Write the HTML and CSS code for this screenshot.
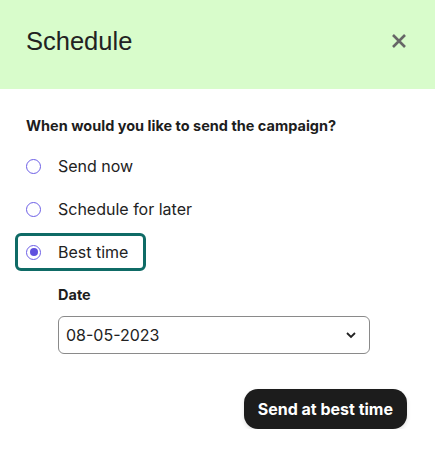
FILE: index.html
```html
<!DOCTYPE html>
<html>
<head>
<meta charset="utf-8">
<link rel="stylesheet" href="styles.css">
</head>
<body>
<div class="modal">
  <div class="header">
    <h1 class="title">Schedule</h1>
    <button class="close" aria-label="Close">
      <svg width="16" height="16" viewBox="0 0 16 16"><path d="M2 2 L14 14 M14 2 L2 14" stroke="#666" stroke-width="2.6" stroke-linecap="butt"/></svg>
    </button>
  </div>
  <div class="body">
    <p class="question">When would you like to send the campaign?</p>
    <div class="options">
      <label class="option"><span class="radio"></span><span>Send now</span></label>
      <label class="option"><span class="radio"></span><span>Schedule for later</span></label>
      <label class="option selected"><span class="radio checked"></span><span>Best time</span></label>
    </div>
    <div class="date-field">
      <div class="date-label">Date</div>
      <div class="select">
        <span>08-05-2023</span>
        <svg width="12" height="8" viewBox="0 0 12 8"><path d="M2 2 L6 6 L10 2" fill="none" stroke="#222" stroke-width="1.8"/></svg>
      </div>
    </div>
    <div class="actions">
      <button class="primary">Send at best time</button>
    </div>
  </div>
</div>
</body>
</html>
```

FILE: styles.css
```css
* { box-sizing: border-box; }
html, body { margin: 0; padding: 0; background: #fff; }
body { font-family: Inter, "Noto Sans", sans-serif; color: #1d1d1d; }
.modal { width: 435px; }
.header {
  height: 89px;
  background: #d8fccb;
  display: flex;
  align-items: center;
  justify-content: space-between;
  padding: 0 28px 6px 26px;
}
.title {
  margin: 0;
  font-family: "Liberation Sans", Arial, sans-serif;
  font-weight: 400;
  font-size: 25.5px;
  color: #222;
}
.close {
  background: none; border: 0; padding: 0; width: 16px; height: 16px; display: flex;
  margin-top: -2px;
}
.body { padding: 28px 25px 0 26px; }
.question { margin: 0; font-size: 14.5px; font-weight: 700; line-height: 18px; }
.options { display: flex; flex-direction: column; margin-top: 12px; margin-left: -11px; }
.option {
  display: flex; align-items: center;
  height: 38px; margin-bottom: 5px;
  padding-left: 11px;
  font-size: 16px; color: #222;
  border: 3px solid transparent; border-radius: 6px;
  width: 131px; white-space: nowrap;
}
.option.selected { border-color: #0f6b66; }
.radio {
  width: 15px; height: 15px; border-radius: 50%;
  border: 1.5px solid #6d5fe6; margin-right: 17px; flex: none;
  margin-left: -3px;
  display: flex; align-items: center; justify-content: center;
}
.radio.checked::after {
  content: ""; width: 8px; height: 8px; border-radius: 50%; background: #5f4fdf;
}
.date-field { margin-left: 32px; margin-top: 10px; }
.date-label { font-size: 14.5px; font-weight: 700; line-height: 18px; }
.select {
  margin-top: 12px;
  width: 312px; height: 38px;
  border: 1px solid #8a8a8a; border-radius: 6px;
  display: flex; align-items: center; justify-content: space-between;
  padding: 0 12px 0 7px;
  font-size: 16px; color: #222;
}
.actions { display: flex; justify-content: flex-end; margin-top: 35px; margin-right: 3px; }
.primary {
  background: #1c1c1c; color: #fff; border: 0;
  height: 40px; padding: 0 14px; border-radius: 14px;
  font-family: Inter, sans-serif; font-weight: 700; font-size: 16px;
  box-shadow: 0 2px 4px rgba(0,0,0,0.12);
}
```
